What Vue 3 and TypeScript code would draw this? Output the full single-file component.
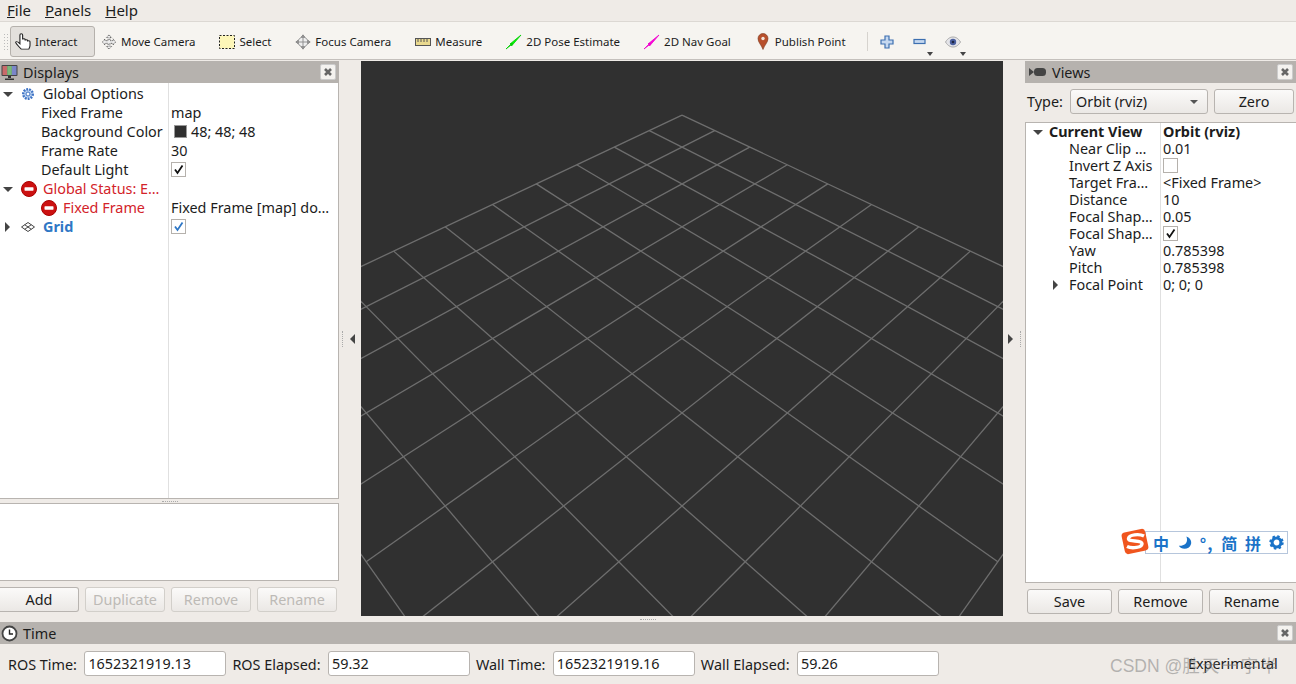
<template>
  <div class="app">
    <div class="menubar">
      <span v-for="m in menus" :key="m.rest" class="menu"><u>{{ m.key }}</u>{{ m.rest }}</span>
    </div>

    <div class="toolbar">
      <div class="grip"></div>
      <button class="tool active">
        <svg width="16" height="17" viewBox="2 1 13 18" preserveAspectRatio="none"><path d="M7 18c-2-3-4-5-4.500-7 0-1 1-1.200 1.800-.4L6 12.500V3c0-1.600 2.200-1.600 2.200 0v5c0-1.200 2-1.200 2 0v1c0-1.200 2-1.200 2 0v1c0-1.200 2-1 2 .2V14c0 2-.6 3-1 4z" fill="#fff" stroke="#222" stroke-width=".9"/></svg>
        Interact
      </button>
      <button class="tool">
        <svg width="16" height="16" viewBox="0 0 18 18"><path d="M9 1l3 3h-2v3.500h3.500v-2l3 3.500-3 3.500v-2H10V14h2l-3 3-3-3h2v-3.500H4.500v2L1.500 9l3-3.500v2H8V4H6z" fill="#eee" stroke="#555" stroke-dasharray="1.500 1"/></svg>
        Move Camera
      </button>
      <button class="tool">
        <svg width="16" height="14" viewBox="0 0 16 14"><rect x=".5" y=".5" width="15" height="13" fill="#fdf6b8" stroke="#222" stroke-dasharray="2 1.500"/></svg>
        Select
      </button>
      <button class="tool">
        <svg width="16" height="16" viewBox="0 0 18 18"><circle cx="9" cy="9" r="5.500" fill="#eee" stroke="#888"/><path d="M9 1v16M1 9h16M9 1l-2 2.500h4zM9 17l-2-2.500h4zM1 9l2.500-2v4zM17 9l-2.500-2v4z" fill="#aaa" stroke="#888"/></svg>
        Focus Camera
      </button>
      <button class="tool">
        <svg width="16" height="8" viewBox="0 0 16 8"><rect x=".5" y=".5" width="15" height="7" fill="#e9d98f" stroke="#555"/><path d="M3 1v3M6 1v3M9 1v3M12 1v3" stroke="#555"/></svg>
        Measure
      </button>
      <button class="tool">
        <svg width="16" height="16" viewBox="0 0 16 16"><path d="M0 15L6 9l-.5 3L15 1 4 10l3-.5z" fill="#0f0" stroke="#0c0" stroke-width=".8"/></svg>
        2D Pose Estimate
      </button>
      <button class="tool">
        <svg width="16" height="16" viewBox="0 0 16 16"><path d="M0 15L6 9l-.5 3L15 1 4 10l3-.5z" fill="#f0d" stroke="#e0c" stroke-width=".8"/></svg>
        2D Nav Goal
      </button>
      <button class="tool">
        <svg width="16" height="17" viewBox="-2 0 16 17"><path d="M6 16.500C4.500 12 1 9.500 1 5.500a5 5 0 0 1 10 0C11 9.500 7.500 12 6 16.500z" fill="#b8502c" stroke="#7a3a20" stroke-width=".6"/><circle cx="6" cy="5.500" r="1.700" fill="#f3e6dc"/></svg>
        Publish Point
      </button>
      <div class="sep"></div>
      <button class="tool icon">
        <svg width="14" height="14" viewBox="0 0 14 14"><path d="M5 1h4v4h4v4H9v4H5V9H1V5h4z" fill="#c5d8f0" stroke="#3d6fb0" stroke-width="1.200"/></svg>
      </button>
      <button class="tool icon">
        <svg width="14" height="8" viewBox="0 0 14 8"><rect x="1" y="1.500" width="11" height="4" fill="#c5d8f0" stroke="#3d6fb0" stroke-width="1.200"/></svg>
        <i class="drop"></i>
      </button>
      <button class="tool icon">
        <svg width="16" height="12" viewBox="0 0 16 12"><path d="M.5 6C3 2 5.500 1 8 1s5 1 7.500 5c-2.500 4-5 5-7.500 5S3 10 .5 6z" fill="#e4e4e8" stroke="#aaa"/><circle cx="8" cy="6" r="3.200" fill="#4a5f9e"/><circle cx="8" cy="6" r="1.300" fill="#1d2540"/></svg>
        <i class="drop"></i>
      </button>
    </div>

    <div class="main">
      <section class="dock left">
        <header class="title">
          <svg width="17" height="17" viewBox="0 0 17 17"><rect x=".5" y="1" width="16" height="11" fill="#444" rx="1"/><rect x="1.500" y="2" width="4.700" height="9" fill="#c86a6a"/><rect x="6.200" y="2" width="4.700" height="9" fill="#7ab87a"/><rect x="10.900" y="2" width="4.600" height="9" fill="#7a86c8"/><path d="M7 12h3v2H7zM4 14.500h9v1.500H4z" fill="#333"/></svg>
          <span>Displays</span>
          <i class="close"><svg width="10" height="10" viewBox="0 0 10 10"><path d="M2 2l6 6M8 2l-6 6" stroke="#666" stroke-width="2.600"/></svg></i>
        </header>
        <div class="tree displays">
          <div v-for="row in displayRows" :key="row.id" class="row">
            <div class="name" :class="row.cls" :style="{ paddingLeft: row.textX + 'px' }">
              <i v-if="row.arrow" class="arrow" :class="row.arrow"></i>
              <svg v-if="row.icon === 'gear'" class="ico" width="14" height="14" viewBox="0 0 14 14"><circle cx="7" cy="7" r="4.800" fill="#bcd3f0" stroke="#3d72c4" stroke-width="2.400" stroke-dasharray="1.800 1.100"/><circle cx="7" cy="7" r="2" fill="#fff" stroke="#3d72c4"/></svg>
              <svg v-if="row.icon === 'stop'" class="ico" width="16" height="16" viewBox="0 0 16 16"><circle cx="8" cy="8" r="7.500" fill="#cc1111" stroke="#a00"/><rect x="3.500" y="6.300" width="9" height="3.400" rx=".6" fill="#fff"/></svg>
              <svg v-if="row.icon === 'grid'" class="ico" width="14" height="10" viewBox="0 0 14 10"><path d="M7 .5L13.500 5 7 9.500.5 5zM3.700 2.700L10.300 7.300M10.300 2.700L3.700 7.300" fill="none" stroke="#444"/></svg>
              <span>{{ row.name }}</span>
            </div>
            <div class="value">
              <i v-if="row.swatch" class="swatch"></i>
              <i v-if="row.check" class="check" :class="row.check">
                <svg width="11" height="11" viewBox="0 0 11 11"><path d="M2 5.500l2.500 3.500L9.500 1.500" fill="none" stroke="currentColor" stroke-width="1.800"/></svg>
              </i>
              <span>{{ row.value }}</span>
            </div>
          </div>
        </div>
        <div class="handle-h"><i></i></div>
        <div class="desc"></div>
        <div class="buttons displays-btns">
          <button class="btn first">Add</button>
          <button class="btn" disabled>Duplicate</button>
          <button class="btn" disabled>Remove</button>
          <button class="btn" disabled>Rename</button>
        </div>
      </section>

      <div class="side-handle to-left"><i class="dots"></i><i class="tri-l"></i></div>

      <div class="viewport">
        <svg width="642" height="555" viewBox="0 0 642 555">
          <line v-for="(l, i) in gridLines" :key="i" :x1="l.x1" :y1="l.y1" :x2="l.x2" :y2="l.y2" class="gridline" />
        </svg>
      </div>

      <div class="side-handle to-right"><i class="tri-r"></i><i class="dots"></i></div>

      <section class="dock right">
        <header class="title">
          <svg class="cam" width="17" height="10" viewBox="0 0 17 10"><path d="M0 1l5 4-5 4z" fill="#444"/><rect x="5" y="1" width="12" height="8" rx="3.500" fill="#444"/></svg>
          <span>Views</span>
          <i class="close"><svg width="10" height="10" viewBox="0 0 10 10"><path d="M2 2l6 6M8 2l-6 6" stroke="#666" stroke-width="2.600"/></svg></i>
        </header>
        <div class="type-row">
          <label>Type:</label>
          <div class="combo">Orbit (rviz)<i class="combo-arrow"></i></div>
          <button class="btn zero">Zero</button>
        </div>
        <div class="tree views">
          <div v-for="row in viewRows" :key="row.id" class="row">
            <div class="name" :class="row.cls" :style="{ paddingLeft: row.textX + 'px' }">
              <i v-if="row.arrow" class="arrow" :class="row.arrow"></i>
              <span>{{ row.name }}</span>
            </div>
            <div class="value" :class="row.cls">
              <i v-if="row.check" class="check" :class="row.check">
                <svg v-if="row.check !== 'off'" width="11" height="11" viewBox="0 0 11 11"><path d="M2 5.500l2.500 3.500L9.500 1.500" fill="none" stroke="currentColor" stroke-width="1.800"/></svg>
              </i>
              <span>{{ row.value }}</span>
            </div>
          </div>
          <div class="ime">
            <svg class="ime-logo" width="30" height="29" viewBox="0 0 30 29">
              <rect x="3" y="3.500" width="24" height="22" rx="3.500" fill="#f0551e" transform="rotate(-12 15 14.500)"/>
              <path d="M24 9C19 6.500 9 7.500 8.500 11.500 8 15.500 21.500 12.500 22 16.500 22.500 20.500 12 22 7 19.500" fill="none" stroke="#fff" stroke-width="3.400"/>
            </svg>
            <span class="ime-items">
              <b>中</b>
              <svg width="15" height="16" viewBox="0 0 16 16"><path d="M10 1c2 5 0 10-8 10 2 4 11 5 13-2 1-4-2-7-5-8z" fill="#1a73c8"/></svg>
              <b class="dots-mark">°,</b>
              <b>简</b>
              <b>拼</b>
              <svg width="15" height="15" viewBox="0 0 15 15"><circle cx="7.500" cy="7.500" r="4.400" fill="none" stroke="#1a73c8" stroke-width="3"/><circle cx="7.500" cy="7.500" r="6" fill="none" stroke="#1a73c8" stroke-width="2.400" stroke-dasharray="2.400 2.310"/></svg>
            </span>
          </div>
        </div>
        <div class="buttons views-btns">
          <button class="btn">Save</button>
          <button class="btn">Remove</button>
          <button class="btn">Rename</button>
        </div>
      </section>
    </div>

    <div class="handle-h bottom"><i></i></div>

    <section class="time">
      <header class="title">
        <svg width="17" height="17" viewBox="0 0 17 17"><circle cx="8.500" cy="8.500" r="7" fill="#fff" stroke="#444" stroke-width="1.800"/><path d="M8.500 4.500v4.500h3.500" fill="none" stroke="#222" stroke-width="1.400"/></svg>
        <span>Time</span>
        <i class="close"><svg width="10" height="10" viewBox="0 0 10 10"><path d="M2 2l6 6M8 2l-6 6" stroke="#666" stroke-width="2.600"/></svg></i>
      </header>
      <div class="time-row">
        <template v-for="t in times" :key="t.label">
          <label>{{ t.label }}</label>
          <div class="field">{{ t.value }}</div>
        </template>
        <span class="experimental">Experimental</span>
        <span class="watermark">CSDN @<em>胜天一宇半</em></span>
      </div>
    </section>
  </div>
</template>

<script setup lang="ts">
interface Row {
  id: string
  name: string
  value?: string
  textX: number
  arrow?: 'down' | 'right'
  icon?: 'gear' | 'stop' | 'grid'
  cls?: string
  swatch?: boolean
  check?: 'on' | 'off' | 'blue'
}

const menus = [
  { key: 'F', rest: 'ile' },
  { key: 'P', rest: 'anels' },
  { key: 'H', rest: 'elp' }
]

const displayRows: Row[] = [
  { id: 'go', name: 'Global Options', textX: 43, arrow: 'down', icon: 'gear' },
  { id: 'ff', name: 'Fixed Frame', value: 'map', textX: 41 },
  { id: 'bg', name: 'Background Color', value: '48; 48; 48', textX: 41, swatch: true },
  { id: 'fr', name: 'Frame Rate', value: '30', textX: 41 },
  { id: 'dl', name: 'Default Light', textX: 41, check: 'on' },
  { id: 'gs', name: 'Global Status: E…', textX: 43, arrow: 'down', icon: 'stop', cls: 'err' },
  { id: 'fe', name: 'Fixed Frame', value: 'Fixed Frame [map] do…', textX: 63, icon: 'stop', cls: 'err sub' },
  { id: 'gr', name: 'Grid', textX: 43, arrow: 'right', icon: 'grid', cls: 'link', check: 'blue' }
]

const viewRows: Row[] = [
  { id: 'cv', name: 'Current View', value: 'Orbit (rviz)', textX: 23, arrow: 'down', cls: 'strong' },
  { id: 'nc', name: 'Near Clip …', value: '0.01', textX: 43 },
  { id: 'iz', name: 'Invert Z Axis', textX: 43, check: 'off' },
  { id: 'tf', name: 'Target Fra…', value: '<Fixed Frame>', textX: 43 },
  { id: 'di', name: 'Distance', value: '10', textX: 43 },
  { id: 'f1', name: 'Focal Shap…', value: '0.05', textX: 43 },
  { id: 'f2', name: 'Focal Shap…', textX: 43, check: 'on' },
  { id: 'ya', name: 'Yaw', value: '0.785398', textX: 43 },
  { id: 'pi', name: 'Pitch', value: '0.785398', textX: 43 },
  { id: 'fp', name: 'Focal Point', value: '0; 0; 0', textX: 43, arrow: 'right', cls: 'nested' }
]

const times = [
  { label: 'ROS Time:', value: '1652321919.13' },
  { label: 'ROS Elapsed:', value: '59.32' },
  { label: 'Wall Time:', value: '1652321919.16' },
  { label: 'Wall Elapsed:', value: '59.26' }
]

// orbit camera looking at the origin: distance 10, pitch and yaw 45deg, 45deg fov
const W = 642
const H = 555
const focal = H / 2 / Math.tan(Math.PI / 8)
const s = Math.SQRT1_2

function project(gx: number, gy: number) {
  const right = (gx - gy) * s
  const along = (gx + gy) * s
  const depth = 10 + along * s
  return {
    x: W / 2 + (right / depth) * focal,
    y: H / 2 - ((along * s) / depth) * focal
  }
}

const gridLines = Array.from({ length: 11 }, (_, i) => i - 5).flatMap((n) => {
  const a = project(n, -5)
  const b = project(n, 5)
  const c = project(-5, n)
  const d = project(5, n)
  return [
    { x1: a.x, y1: a.y, x2: b.x, y2: b.y },
    { x1: c.x, y1: c.y, x2: d.x, y2: d.y }
  ]
})
</script>

<style>
html, body { margin: 0; background: #efebe7; }
</style>

<style scoped>
.app {
  width: 1296px;
  height: 684px;
  overflow: hidden;
  background: #efebe7;
  color: #1c1c1c;
  font-family: "Noto Sans", "Open Sans", sans-serif;
  font-size: 14.4px;
  display: flex;
  flex-direction: column;
}

.menubar {
  display: flex;
  gap: 14px;
  padding: 0 0 2px 7px;
  height: 19px;
  flex: none;
  align-items: center;
  border-bottom: 1px solid #dcd8d3;
  font-size: 15px;
}

.toolbar {
  height: 38px;
  display: flex;
  align-items: center;
  background: #f6f4f0;
  border-bottom: 1px solid #c4c0bc;
  padding: 2px 0 0 3px;
  box-sizing: border-box;
  flex: none;
}

.grip {
  width: 5px;
  height: 18px;
  margin-right: 2px;
  background-image: radial-gradient(#bbb 0.6px, transparent 0.8px);
  background-size: 3px 3px;
}

.tool {
  display: flex;
  align-items: center;
  gap: 4px;
  height: 31px;
  padding: 0 4px;
  margin-right: 14px;
  border: 1px solid transparent;
  border-radius: 3px;
  background: none;
  font: inherit;
  font-size: 11.5px;
  color: #1c1c1c;
  position: relative;
  white-space: nowrap;
}

.tool.active {
  background: #e3e0dc;
  border-color: #b5b1ac;
  width: 85px;
  margin-right: 1px;
}

.tool.icon { margin-right: 3px; width: 30px; justify-content: center; }

.drop {
  position: absolute;
  right: 1px;
  bottom: 0;
  border: 3px solid transparent;
  border-top: 4px solid #444;
  border-bottom: 0;
}

.sep {
  width: 1px;
  height: 19px;
  background: #d6d3ce;
  margin: 0 4px 0 2px;
}

.main {
  height: 555px;
  margin-top: 1px;
  display: flex;
  flex: none;
}

.dock { display: flex; flex-direction: column; }
.dock.left { width: 339px; }
.dock.right { width: 271px; }

.title {
  height: 22px;
  flex: none;
  background: #b6b2ae;
  display: flex;
  align-items: center;
  gap: 5px;
  padding-left: 1px;
}

.title span { flex: 1; }
.title .cam { margin: 0 1px 0 3px; }

.close {
  width: 16px;
  height: 16px;
  margin-right: 3px;
  box-sizing: border-box;
  border: 1px solid #ccc;
  border-radius: 2px;
  background: #f4f2ef;
  display: flex;
  align-items: center;
  justify-content: center;
}

.tree {
  background: #fff;
  border: 1px solid #b8b4b0;
  border-top: 0;
  position: relative;
  box-sizing: border-box;
}

.tree.displays {
  height: 416px;
  padding-top: 1px;
  border-left: 0;
  background: linear-gradient(#e0e0e0, #e0e0e0) 168px 0 / 1px 100% no-repeat #fff;
}

.row { display: flex; align-items: center; }
.displays .row { height: 19px; }
.views .row { height: 17px; }

.name {
  display: flex;
  align-items: center;
  flex: none;
  white-space: nowrap;
  position: relative;
  box-sizing: border-box;
}

.displays .name { width: 169px; }
.views .name { width: 135px; }

.value { display: flex; align-items: center; padding-left: 2px; white-space: nowrap; }

.arrow {
  position: absolute;
  left: 3px;
  top: 50%;
}
.views .arrow { left: 7px; }
.arrow.down {
  margin-top: -2px;
  border-left: 5px solid transparent;
  border-right: 5px solid transparent;
  border-top: 5px solid #444;
}
.arrow.right {
  margin-top: -5px;
  left: 5px;
  border-top: 5px solid transparent;
  border-bottom: 5px solid transparent;
  border-left: 5px solid #444;
}
.nested .arrow.right { left: 27px; }

.ico { position: absolute; left: 21px; }
.sub .ico { left: 41px; }

.err { color: #d3232a; }
.link { color: #2f77c5; font-weight: 700; }
.strong { font-weight: 700; }

.swatch {
  width: 13px;
  height: 13px;
  background: #303030;
  border: 1px solid #999;
  box-sizing: border-box;
  margin: 0 4px 0 3px;
}

.check {
  width: 13px;
  height: 13px;
  background: #fff;
  border: 1px solid #b5b1ac;
  display: flex;
  align-items: center;
  justify-content: center;
  color: #111;
}
.check.blue { color: #2f77c5; }

.handle-h {
  height: 4px;
  flex: none;
  display: flex;
  align-items: center;
  justify-content: center;
}
.handle-h i {
  width: 16px;
  border-top: 1px dotted #aaa;
}

.desc {
  height: 78px;
  box-sizing: border-box;
  background: #fff;
  border: 1px solid #b8b4b0;
  border-left: 0;
  flex: none;
}

.buttons { display: flex; }
.displays-btns { gap: 6px; margin-top: 6px; }
.views-btns { gap: 6px; margin: 6px 0 0 2px; }

.btn {
  height: 25px;
  width: 80px;
  padding: 0;
  border: 1px solid #b8b4b0;
  border-radius: 3px;
  background: linear-gradient(#fbfaf9, #ebe8e5);
  font: inherit;
  color: #1c1c1c;
}
.btn:disabled { color: #bdbab6; border-color: #d2cfca; }
.btn.first { width: 79px; border-left: 0; border-radius: 0 3px 3px 0; }
.views-btns .btn { width: 85px; }

.side-handle {
  width: 22px;
  display: flex;
  align-items: center;
}
.to-left { padding-left: 3px; box-sizing: border-box; gap: 7px; }
.to-right { padding-left: 5px; box-sizing: border-box; gap: 7px; }
.dots {
  height: 16px;
  border-left: 1px dotted #aaa;
}
.tri-l {
  border-top: 5px solid transparent;
  border-bottom: 5px solid transparent;
  border-right: 5px solid #444;
}
.tri-r {
  border-top: 5px solid transparent;
  border-bottom: 5px solid transparent;
  border-left: 5px solid #444;
}

.viewport {
  width: 642px;
  height: 555px;
  background: #303030;
  overflow: hidden;
}
.viewport svg { display: block; }
.gridline { stroke: #6e6e6e; stroke-width: 1.3; }

.type-row {
  height: 25px;
  margin: 6px 2px 8px 2px;
  display: flex;
  align-items: center;
}
.type-row label { width: 43px; }

.combo {
  width: 138px;
  height: 25px;
  box-sizing: border-box;
  border: 1px solid #b8b4b0;
  border-radius: 3px;
  background: linear-gradient(#fbfaf9, #ebe8e5);
  display: flex;
  align-items: center;
  padding-left: 5px;
  position: relative;
}
.combo-arrow {
  position: absolute;
  right: 9px;
  top: 10px;
  border-left: 4px solid transparent;
  border-right: 4px solid transparent;
  border-top: 4px solid #555;
}
.zero { margin-left: 6px; }

.tree.views {
  height: 461px;
  border-top: 1px solid #b8b4b0;
  background: linear-gradient(#e0e0e0, #e0e0e0) 134px 0 / 1px 100% no-repeat #fff;
  border-right: 0;
}

.ime {
  position: absolute;
  left: 94px;
  top: 404px;
  width: 168px;
  height: 29px;
}
.ime-logo { position: absolute; left: 0; top: 0; z-index: 1; }
.ime-items {
  position: absolute;
  left: 25px;
  top: 4px;
  width: 143px;
  height: 23px;
  box-sizing: border-box;
  background: #fff;
  border: 1px solid #b6c6dc;
  display: flex;
  align-items: center;
  justify-content: space-between;
  padding: 0 3px 0 7px;
  color: #1a73c8;
  font-family: "Noto Sans CJK SC", sans-serif;
  font-size: 16px;
}
.ime-items b { font-weight: 700; }
.ime-items .dots-mark { letter-spacing: 1px; }

.handle-h.bottom { height: 6px; }

.time { flex: 1; }

.time-row {
  display: flex;
  align-items: flex-start;
  height: 40px;
  padding: 7px 0 0 8px;
  box-sizing: border-box;
  position: relative;
}
.time-row label { line-height: 27px; margin-right: 7.4px; }

.field {
  width: 142px;
  height: 25px;
  box-sizing: border-box;
  background: #fff;
  border: 1px solid #b8b4b0;
  border-radius: 3px;
  padding-left: 3px;
  line-height: 23px;
  margin-right: 6px;
  flex: none;
}

.experimental { position: absolute; left: 1188px; top: 10px; }
.watermark {
  position: absolute;
  left: 1110px;
  top: 8px;
  font-size: 17.5px;
  color: rgba(120, 120, 120, 0.5);
  font-family: "Liberation Sans", "Noto Sans CJK SC", sans-serif;
  white-space: nowrap;
}
.watermark em { font-style: normal; letter-spacing: 2px; }
</style>
